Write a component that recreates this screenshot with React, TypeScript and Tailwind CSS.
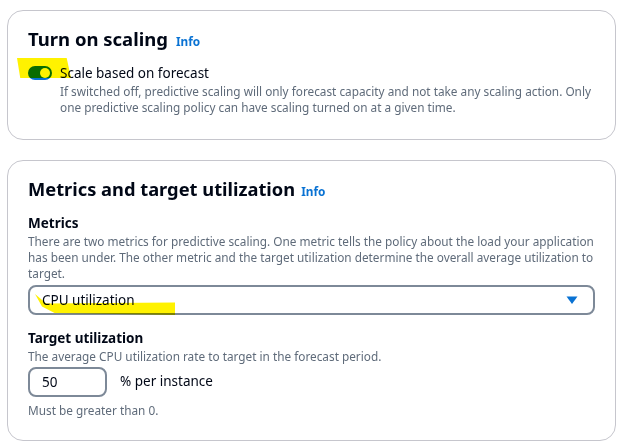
import React from "react";

export default function App() {
  return (
    <div
      className="w-[627px] h-[447px] bg-white pt-[10px] pl-[7px] text-[#000716]"
      style={{ fontFamily: '"Noto Sans", sans-serif' }}
    >
      <div className="w-[609px] h-[130px] border border-[#c6c6cd] rounded-[16px] pl-[20px] pt-[14px]">
        <div className="flex items-baseline gap-[8px]">
          <h2 className="text-[18.5px] font-bold leading-[28px]">Turn on scaling</h2>
          <span className="text-[11.8px] font-bold text-[#0972d3]">Info</span>
        </div>
        <div className="relative flex mt-[10px]">
          <div className="pt-[3px] w-[32px] shrink-0">
            <div className="w-[24px] h-[14px] rounded-full bg-[#0972d3] relative">
              <div className="absolute right-[2px] top-[2px] w-[10px] h-[10px] rounded-full bg-white" />
            </div>
          </div>
          <div>
            <div className="text-[13.5px] leading-[20px]">Scale based on forecast</div>
            <div className="text-[11.8px] leading-[16px] text-[#5f6b7a] w-[540px]">
              If switched off, predictive scaling will only forecast capacity and not take any scaling action. Only
              one predictive scaling policy can have scaling turned on at a given time.
            </div>
          </div>
          <div
            className="absolute left-[-11px] top-[-5px] w-[54px] h-[20px] bg-[#fff200] mix-blend-multiply"
            style={{ clipPath: "polygon(0 0, 92% 0, 100% 100%, 6% 100%)" }}
          />
        </div>
      </div>

      <div className="w-[609px] h-[281px] mt-[20px] border border-[#c6c6cd] rounded-[16px] pl-[20px] pt-[14px]">
        <div className="flex items-baseline gap-[6px]">
          <h2 className="text-[18.3px] font-bold leading-[28px]">Metrics and target utilization</h2>
          <span className="text-[11.8px] font-bold text-[#0972d3]">Info</span>
        </div>
        <div className="mt-[10px] text-[13.5px] font-bold leading-[20px]">Metrics</div>
        <div className="text-[11.8px] leading-[16px] text-[#5f6b7a] w-[570px]">
          There are two metrics for predictive scaling. One metric tells the policy about the load your application
          has been under. The other metric and the target utilization determine the overall average utilization to
          target.
        </div>
        <div className="relative mt-[4px] w-[567px] h-[30px] border-2 border-[#7d8998] rounded-[8px] flex items-center pl-[12px] pr-[15px] justify-between">
          <span className="text-[13.5px] leading-[20px]">CPU utilization</span>
          <svg width="12" height="9" viewBox="0 0 12 9">
            <path d="M0.5 0.5 L11.5 0.5 L6 8 Z" fill="#0972d3" />
          </svg>
          <div
            className="absolute left-[5px] top-[7px] w-[140px] h-[21px] bg-[#fff200] mix-blend-multiply"
            style={{ clipPath: "polygon(0 0, 8% 45%, 100% 40%, 100% 100%, 14% 90%, 5% 60%)" }}
          />
        </div>
        <div className="mt-[13px] text-[13.5px] font-bold leading-[20px]">Target utilization</div>
        <div className="text-[11.8px] leading-[16px] text-[#5f6b7a]">
          The average CPU utilization rate to target in the forecast period.
        </div>
        <div className="flex items-center mt-[3px]">
          <div className="w-[79px] h-[30px] border-2 border-[#7d8998] rounded-[8px] flex items-center pl-[12px] text-[13.5px]">
            50
          </div>
          <span className="ml-[13px] text-[13.5px] leading-[20px] -mt-[3px]">% per instance</span>
        </div>
        <div className="mt-[5px] text-[11.8px] leading-[16px] text-[#5f6b7a]">Must be greater than 0.</div>
      </div>
    </div>
  );
}
